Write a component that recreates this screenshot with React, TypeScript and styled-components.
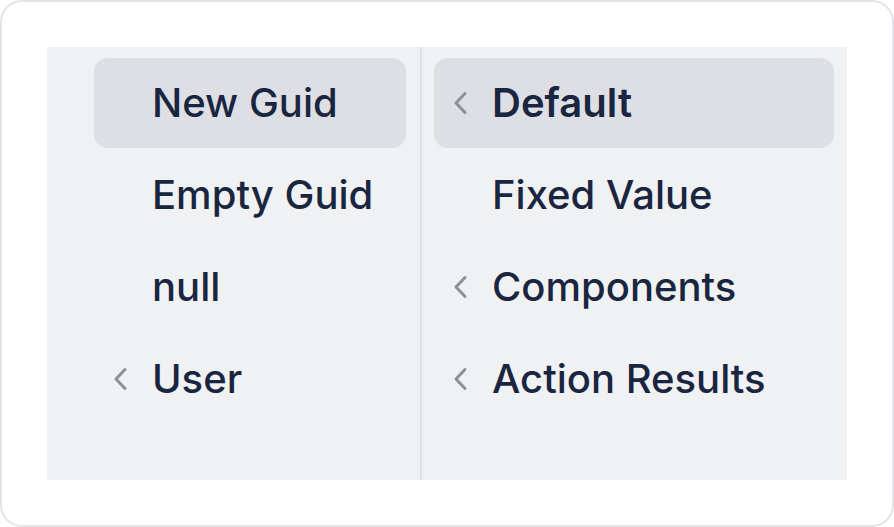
import React from "react";
import styled, { createGlobalStyle } from "styled-components";

const Global = createGlobalStyle`
  html, body { margin: 0; padding: 0; background: #ffffff; }
  body { font-family: Inter, "Noto Sans", sans-serif; }
  * { box-sizing: border-box; }
`;

const Card = styled.div`
  width: 894px;
  height: 527px;
  border: 2px solid #e2e4e8;
  border-radius: 22px;
  background: #ffffff;
  padding: 45px;
`;

const Panel = styled.div`
  display: flex;
  height: 433px;
  background: #f0f1f3;
`;

const Column = styled.div<{ $width?: number; $padLeft: number; $padRight: number }>`
  display: flex;
  flex-direction: column;
  gap: 2px;
  ${(p) => (p.$width ? `width: ${p.$width}px;` : "flex: 1;")}
  padding: 11px ${(p) => p.$padRight}px 0 ${(p) => p.$padLeft}px;
`;

const Divider = styled.div`
  width: 2px;
  background: #dfe1e5;
`;

const Item = styled.div<{ $active?: boolean }>`
  display: grid;
  grid-template-columns: 58px auto;
  align-items: center;
  height: 90px;
  border-radius: 14px;
  background: ${(p) => (p.$active ? "#dedfe4" : "transparent")};
`;

const IconCell = styled.span`
  display: flex;
  align-items: center;
  padding-left: 17px;
  color: #8d9097;
`;

const Label = styled.span<{ $active?: boolean }>`
  font-size: 40px;
  font-weight: ${(p) => (p.$active ? 600 : 500)};
  color: #1a2640;
  white-space: nowrap;
  margin-top: -1px;
`;

const Chevron = () => (
  <svg width="18" height="28" viewBox="0 0 18 28" fill="none">
    <path d="M14 4.5 L5 14 L14 23.5" stroke="currentColor" strokeWidth="3" strokeLinecap="round" strokeLinejoin="round" />
  </svg>
);

type Entry = { label: string; sub?: boolean; active?: boolean };

const left: Entry[] = [
  { label: "New Guid", active: true },
  { label: "Empty Guid" },
  { label: "null" },
  { label: "User", sub: true },
];

const right: Entry[] = [
  { label: "Default", sub: true, active: true },
  { label: "Fixed Value" },
  { label: "Components", sub: true },
  { label: "Action Results", sub: true },
];

const Row = ({ e }: { e: Entry }) => (
  <Item $active={e.active}>
    <IconCell>{e.sub ? <Chevron /> : null}</IconCell>
    <Label $active={e.active && e.sub}>{e.label}</Label>
  </Item>
);

export default function App() {
  return (
    <>
      <Global />
      <Card>
        <Panel>
          <Column $width={373} $padLeft={47} $padRight={14}>
            {left.map((e) => (
              <Row key={e.label} e={e} />
            ))}
          </Column>
          <Divider />
          <Column $padLeft={12} $padRight={13}>
            {right.map((e) => (
              <Row key={e.label} e={e} />
            ))}
          </Column>
        </Panel>
      </Card>
    </>
  );
}
